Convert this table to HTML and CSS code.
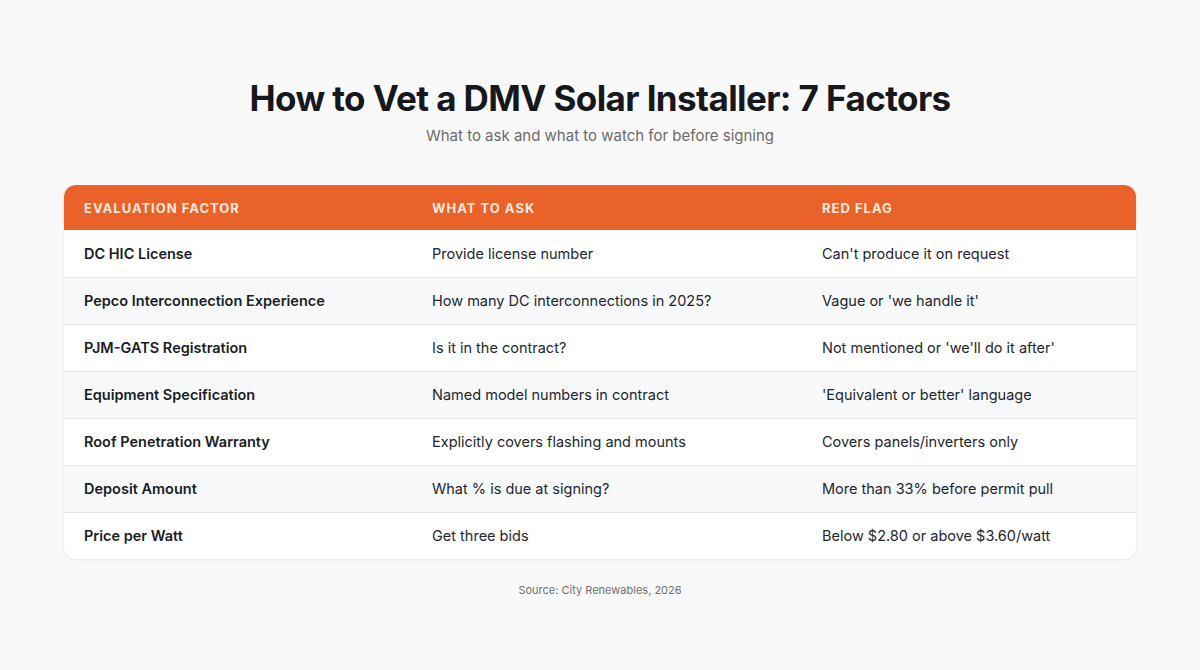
FILE: index.html
```html
<!DOCTYPE html>
<html>
<head>
<meta charset="utf-8">
<link rel="stylesheet" href="styles.css">
</head>
<body>
<main class="page">
  <header class="head">
    <h1 class="title">How to Vet a DMV Solar Installer: 7 Factors</h1>
    <p class="subtitle">What to ask and what to watch for before signing</p>
  </header>
  <div class="card">
    <table class="tbl">
      <colgroup><col class="c1"><col class="c2"><col class="c3"></colgroup>
      <thead>
        <tr><th>Evaluation Factor</th><th>What to Ask</th><th>Red Flag</th></tr>
      </thead>
      <tbody>
        <tr><td class="f">DC HIC License</td><td>Provide license number</td><td>Can't produce it on request</td></tr>
        <tr><td class="f">Pepco Interconnection Experience</td><td>How many DC interconnections in 2025?</td><td>Vague or 'we handle it'</td></tr>
        <tr><td class="f">PJM-GATS Registration</td><td>Is it in the contract?</td><td>Not mentioned or 'we'll do it after'</td></tr>
        <tr><td class="f">Equipment Specification</td><td>Named model numbers in contract</td><td>'Equivalent or better' language</td></tr>
        <tr><td class="f">Roof Penetration Warranty</td><td>Explicitly covers flashing and mounts</td><td>Covers panels/inverters only</td></tr>
        <tr><td class="f">Deposit Amount</td><td>What % is due at signing?</td><td>More than 33% before permit pull</td></tr>
        <tr><td class="f">Price per Watt</td><td>Get three bids</td><td>Below $2.80 or above $3.60/watt</td></tr>
      </tbody>
    </table>
  </div>
  <p class="source">Source: City Renewables, 2026</p>
</main>
</body>
</html>
```
FILE: styles.css
```css
* { box-sizing: border-box; }
html, body { margin: 0; padding: 0; }
body {
  background: #f9f9f9;
  font-family: Inter, "Liberation Sans", Arial, sans-serif;
  color: #1a1d24;
  width: 1200px;
  height: 670px;
}
.page {
  padding: 76px 64px 0;
}
.head { text-align: center; }
.title {
  margin: 0;
  font-size: 35px;
  line-height: 44px;
  font-weight: 700;
  letter-spacing: -0.6px;
  color: #16181d;
}
.subtitle {
  margin: 6px 0 0;
  font-size: 15px;
  line-height: 20px;
  color: #6b6b6b;
}
.card {
  margin-top: 39px;
  background: #fff;
  border-radius: 12px;
  overflow: hidden;
  box-shadow: 0 1px 3px rgba(0,0,0,0.05), 0 1px 2px rgba(0,0,0,0.03);
}
.tbl {
  width: 100%;
  border-collapse: collapse;
  table-layout: fixed;
}
.c1 { width: 348px; }
.c2 { width: 390px; }
.c3 { width: 334px; }
.tbl th {
  background: #e8622a;
  color: #fde9dd;
  text-align: left;
  font-size: 13px;
  font-weight: 700;
  letter-spacing: 1px;
  text-transform: uppercase;
  height: 45px;
  padding: 0 20px;
}
.tbl td {
  height: 47px;
  padding: 0 20px;
  font-size: 14.5px;
  color: #23262d;
  border-top: 1px solid #e6e8eb;
}
.tbl tbody tr:first-child td { border-top: none; }
.tbl tbody tr:nth-child(even) td { background: #f7f9fb; }
.tbl td.f { font-weight: 600; color: #1a1d24; }
.source {
  margin: 24px 0 0;
  text-align: center;
  font-size: 11px;
  color: #707070;
}
```
